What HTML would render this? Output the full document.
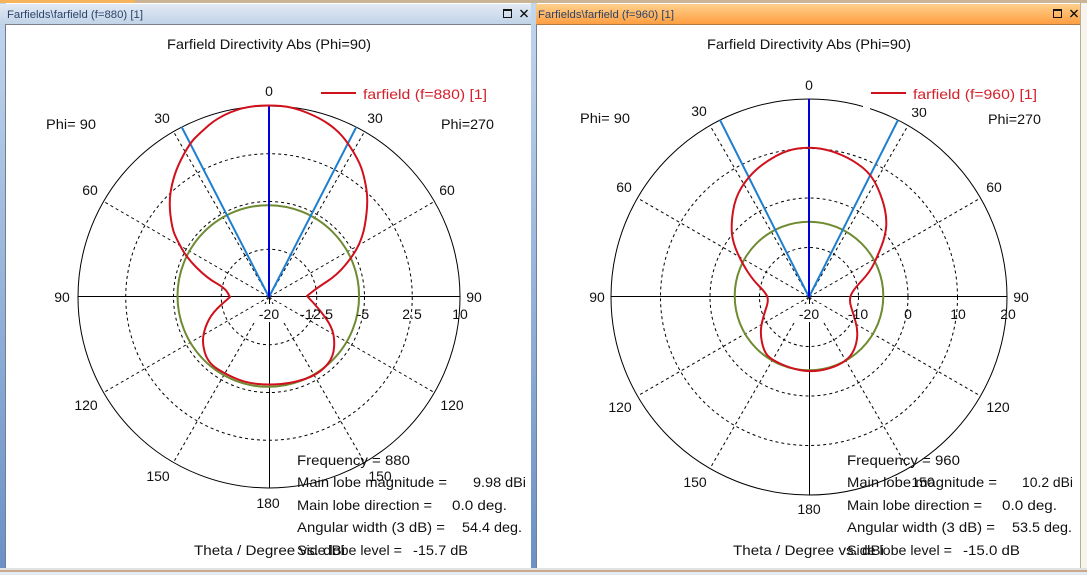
<!DOCTYPE html>
<html><head><meta charset="utf-8"><style>
html,body{margin:0;padding:0;background:#fff;width:1087px;height:575px;overflow:hidden}
svg{display:block}
text{font-family:"Liberation Sans",sans-serif;font-size:14px;fill:#111}
.c{text-anchor:middle}
.t{font-size:11px;fill:#2b4468}
.r{fill:#d3202a}
.d{fill:none;stroke:#000;stroke-width:1;stroke-dasharray:3 3}
</style></head><body>
<svg width="1087" height="575" viewBox="0 0 1087 575" xmlns="http://www.w3.org/2000/svg">
<defs>
<linearGradient id="b" x1="0" y1="0" x2="0" y2="1"><stop offset="0" stop-color="#e2eaf4"/><stop offset="1" stop-color="#bfd2e7"/></linearGradient>
<linearGradient id="o" x1="0" y1="0" x2="0" y2="1"><stop offset="0" stop-color="#ffd08c"/><stop offset="1" stop-color="#ff9c3e"/></linearGradient>
<linearGradient id="s" x1="0" y1="0" x2="0" y2="1"><stop offset="0" stop-color="#c3d6ee"/><stop offset="1" stop-color="#6b91c6"/></linearGradient>
</defs>
<rect width="1087" height="575" fill="#fff"/>
<!-- frame -->
<rect x="0" y="0" width="1087" height="3" fill="#c9b596"/>
<rect x="0" y="0" width="135" height="3" fill="#f5b45c"/>
<rect x="0" y="3" width="6" height="565" fill="url(#s)"/>
<rect x="5" y="24" width="1" height="544" fill="#6f7f95"/>
<rect x="0" y="4" width="531" height="21" fill="url(#b)"/>
<rect x="531" y="3" width="6" height="565" fill="url(#s)"/>
<rect x="536" y="24" width="1" height="544" fill="#6f7f95"/>
<rect x="536" y="4" width="545" height="21" fill="url(#o)"/>
<rect x="5" y="24" width="526" height="1" fill="#7b7f86"/>
<rect x="536" y="24" width="545" height="1" fill="#b07a40"/>
<rect x="1080" y="3" width="1" height="565" fill="#b9ad9b"/>
<rect x="1081" y="3" width="6" height="565" fill="#f7f4ee"/>
<rect x="0" y="568" width="1087" height="2" fill="#e2e2e2"/>
<rect x="0" y="570" width="1087" height="2" fill="#c9a98c"/>
<rect x="0" y="572" width="1087" height="3" fill="#e3ecf6"/>
<!-- title bars -->
<text class="t" x="7" y="18" textLength="136" lengthAdjust="spacingAndGlyphs">Farfields\farfield (f=880) [1]</text>
<text class="t" x="538" y="18" textLength="136" lengthAdjust="spacingAndGlyphs">Farfields\farfield (f=960) [1]</text>
<g fill="none" stroke="#111">
<rect x="503.5" y="9.5" width="8" height="8" stroke-width="1"/><path d="M503 10h9" stroke-width="2"/>
<path d="M520.5 10l7 7M527.5 10l-7 7" stroke-width="1.4"/>
<rect x="1053.500" y="9.5" width="8" height="8" stroke-width="1"/><path d="M1053 10h9" stroke-width="2"/>
<path d="M1070.500 10l7 7M1077.500 10l-7 7" stroke-width="1.4"/>
</g>

<!-- LEFT CHART -->
<circle cx="269" cy="297" r="191" fill="none" stroke="#000"/>
<circle class="d" cx="269" cy="297" r="47.75"/><circle class="d" cx="269" cy="297" r="95.5"/><circle class="d" cx="269" cy="297" r="143.25"/>
<path class="d" d="M269 297L364.5 131.6M269 297L173.5 131.6M269 297L434.4 201.5M269 297L103.6 201.5M269 297L434.4 392.5M269 297L103.6 392.5M269 297L364.5 462.4M269 297L173.5 462.4"/>
<path d="M78 296.5H460M269.5 297V488" stroke="#000" fill="none"/>
<rect x="255" y="304" width="28" height="18" fill="#fff"/>
<circle cx="268.3" cy="296" r="90.8" fill="none" stroke="#6e8b32" stroke-width="2"/>
<path d="M269 297L181.7 127M269 297L356.3 127" stroke="#1e7fd0" stroke-width="2" fill="none"/>
<path d="M269 297V105" stroke="#0000d8" stroke-width="2" fill="none"/>
<path fill="none" stroke="#d0101c" stroke-width="2" stroke-linejoin="round" d="M307 296L312 292Q317 288 327 281.5Q337 275 344.5 266Q352 257 356 250Q360 243 362.5 235Q365 227 366.5 213.5Q368 200 366.5 190Q365 180 362.5 171.5Q360 163 354 153Q348 143 342.5 136.5Q337 130 328.5 124Q320 118 306.5 112.5Q293 107 281 106Q269 105 256 106Q243 107 230 112.5Q217 118 208.5 125.5Q200 133 195 138Q190 143 184 154Q178 165 175 174Q172 183 170.5 193Q169 203 170.5 215.5Q172 228 174.5 234Q177 240 182 249Q187 258 197 268Q207 278 216 283Q225 288 227.5 292.5L230 297L221.5 304.5Q213 312 209 319.5Q205 327 203.5 335Q202 343 205 353Q208 363 217.5 369Q227 375 237 379Q247 383 258 384Q269 385 281 384Q293 383 305 379Q317 375 324.5 367.5Q332 360 333.5 351.5Q335 343 333.5 335Q332 327 326 318.5Q320 310 313.5 303L307 296Z"/>
<path d="M321 93H356" stroke="#d0101c" stroke-width="2"/>
<text class="r" x="363" y="99" textLength="124" lengthAdjust="spacingAndGlyphs">farfield (f=880) [1]</text>
<text x="167" y="49" textLength="204" lengthAdjust="spacingAndGlyphs">Farfield Directivity Abs (Phi=90)</text>
<text class="c" x="269" y="96">0</text>
<text class="c" x="162" y="123">30</text><text class="c" x="375" y="123">30</text>
<text class="c" x="90" y="195">60</text><text class="c" x="447" y="195">60</text>
<text class="c" x="62" y="302">90</text><text class="c" x="474" y="302">90</text>
<text class="c" x="86" y="410">120</text><text class="c" x="452" y="410">120</text>
<text class="c" x="158" y="481">150</text><text class="c" x="380" y="481">150</text>
<text class="c" x="268" y="508">180</text>
<text x="46" y="129" textLength="50" lengthAdjust="spacingAndGlyphs">Phi= 90</text><text x="441" y="129" textLength="53" lengthAdjust="spacingAndGlyphs">Phi=270</text>
<text class="c" x="269" y="319">-20</text><text class="c" x="316.5" y="319" textLength="33" lengthAdjust="spacingAndGlyphs">-12.5</text><text class="c" x="363" y="319">-5</text><text class="c" x="412" y="319">2.5</text><text class="c" x="460" y="319">10</text>
<text x="297" y="465" textLength="113" lengthAdjust="spacingAndGlyphs">Frequency = 880</text>
<text x="297" y="487" textLength="150" lengthAdjust="spacingAndGlyphs">Main lobe magnitude =</text><text x="473" y="487" textLength="53" lengthAdjust="spacingAndGlyphs">9.98 dBi</text>
<text x="297" y="510" textLength="135" lengthAdjust="spacingAndGlyphs">Main lobe direction =</text><text x="452" y="510" textLength="55" lengthAdjust="spacingAndGlyphs">0.0 deg.</text>
<text x="297" y="532" textLength="148" lengthAdjust="spacingAndGlyphs">Angular width (3 dB) =</text><text x="462" y="532" textLength="60" lengthAdjust="spacingAndGlyphs">54.4 deg.</text>
<text x="297" y="555" textLength="105" lengthAdjust="spacingAndGlyphs">Side lobe level =</text><text x="413" y="555" textLength="55" lengthAdjust="spacingAndGlyphs">-15.7 dB</text>
<text x="194" y="555" textLength="151" lengthAdjust="spacingAndGlyphs">Theta / Degree vs. dBi</text>

<!-- RIGHT CHART -->
<circle cx="809" cy="297" r="198" fill="none" stroke="#000"/>
<circle class="d" cx="809" cy="297" r="49.5"/><circle class="d" cx="809" cy="297" r="99"/><circle class="d" cx="809" cy="297" r="148.5"/>
<path class="d" d="M809 297L908 125.500M809 297L710 125.500M809 297L980.500 198M809 297L637.500 198M809 297L980.500 396M809 297L637.500 396M809 297L908 468.500M809 297L710 468.500"/>
<path d="M611 296.500H1007M809.500 297V495" stroke="#000" fill="none"/>
<rect x="795" y="304" width="28" height="18" fill="#fff"/>
<rect x="863" y="103" width="7" height="6" fill="#fff"/>
<circle cx="809" cy="296" r="74.300" fill="none" stroke="#6e8b32" stroke-width="2"/>
<path d="M809 297L720 120M809 297L898 120" stroke="#1e7fd0" stroke-width="2" fill="none"/>
<path d="M809 297V99" stroke="#0000d8" stroke-width="2" fill="none"/>
<path fill="none" stroke="#d0101c" stroke-width="2" stroke-linejoin="round" d="M798 148.5Q809 147 819.5 148.5Q830 150 841.5 155Q853 160 862.5 167.5Q872 175 877.5 187.5Q883 200 885 210Q887 220 886 228.5Q885 237 881.5 246Q878 255 874 263.5Q870 272 861.5 281Q853 290 851 295Q849 300 851 306.5Q853 313 855.5 321.5Q858 330 857 338.5Q856 347 852 353.5Q848 360 839 364.5Q830 369 819.5 370.5Q809 372 799.5 370Q790 368 781 364Q772 360 768 356Q764 352 762 342.5Q760 333 761.5 325Q763 317 766 308.5Q769 300 767 296Q765 292 759 286Q753 280 747.5 271.5Q742 263 737.5 253Q733 243 732 234Q731 225 733 211.5Q735 198 741.5 187.5Q748 177 756.5 169.5Q765 162 776 156Q787 150 798 148.5Z"/>
<path d="M871 93H906" stroke="#d0101c" stroke-width="2"/>
<text class="r" x="913" y="99" textLength="124" lengthAdjust="spacingAndGlyphs">farfield (f=960) [1]</text>
<text x="707" y="49" textLength="204" lengthAdjust="spacingAndGlyphs">Farfield Directivity Abs (Phi=90)</text>
<text class="c" x="809" y="90">0</text>
<text class="c" x="699" y="116">30</text><text class="c" x="919" y="117">30</text>
<rect x="908" y="100" width="24" height="8" fill="#fff"/>
<text class="c" x="624" y="192">60</text><text class="c" x="994" y="192">60</text>
<text class="c" x="597" y="302">90</text><text class="c" x="1021" y="302">90</text>
<text class="c" x="620" y="412">120</text><text class="c" x="998" y="412">120</text>
<text class="c" x="695" y="487">150</text><text class="c" x="923" y="487">150</text>
<text class="c" x="809" y="514">180</text>
<text x="580" y="123" textLength="50" lengthAdjust="spacingAndGlyphs">Phi= 90</text><text x="988" y="124" textLength="53" lengthAdjust="spacingAndGlyphs">Phi=270</text>
<text class="c" x="809" y="319">-20</text><text class="c" x="858" y="319">-10</text><text class="c" x="908" y="319">0</text><text class="c" x="958" y="319">10</text><text class="c" x="1008" y="319">20</text>
<text x="847" y="465" textLength="113" lengthAdjust="spacingAndGlyphs">Frequency = 960</text>
<text x="847" y="487" textLength="150" lengthAdjust="spacingAndGlyphs">Main lobe magnitude =</text><text x="1022" y="487" textLength="51" lengthAdjust="spacingAndGlyphs">10.2 dBi</text>
<text x="847" y="510" textLength="135" lengthAdjust="spacingAndGlyphs">Main lobe direction =</text><text x="1002" y="510" textLength="55" lengthAdjust="spacingAndGlyphs">0.0 deg.</text>
<text x="847" y="532" textLength="148" lengthAdjust="spacingAndGlyphs">Angular width (3 dB) =</text><text x="1012" y="532" textLength="60" lengthAdjust="spacingAndGlyphs">53.5 deg.</text>
<text x="847" y="555" textLength="105" lengthAdjust="spacingAndGlyphs">Side lobe level =</text><text x="963" y="555" textLength="57" lengthAdjust="spacingAndGlyphs">-15.0 dB</text>
<text x="733" y="555" textLength="151" lengthAdjust="spacingAndGlyphs">Theta / Degree vs. dBi</text>
</svg>
</body></html>
